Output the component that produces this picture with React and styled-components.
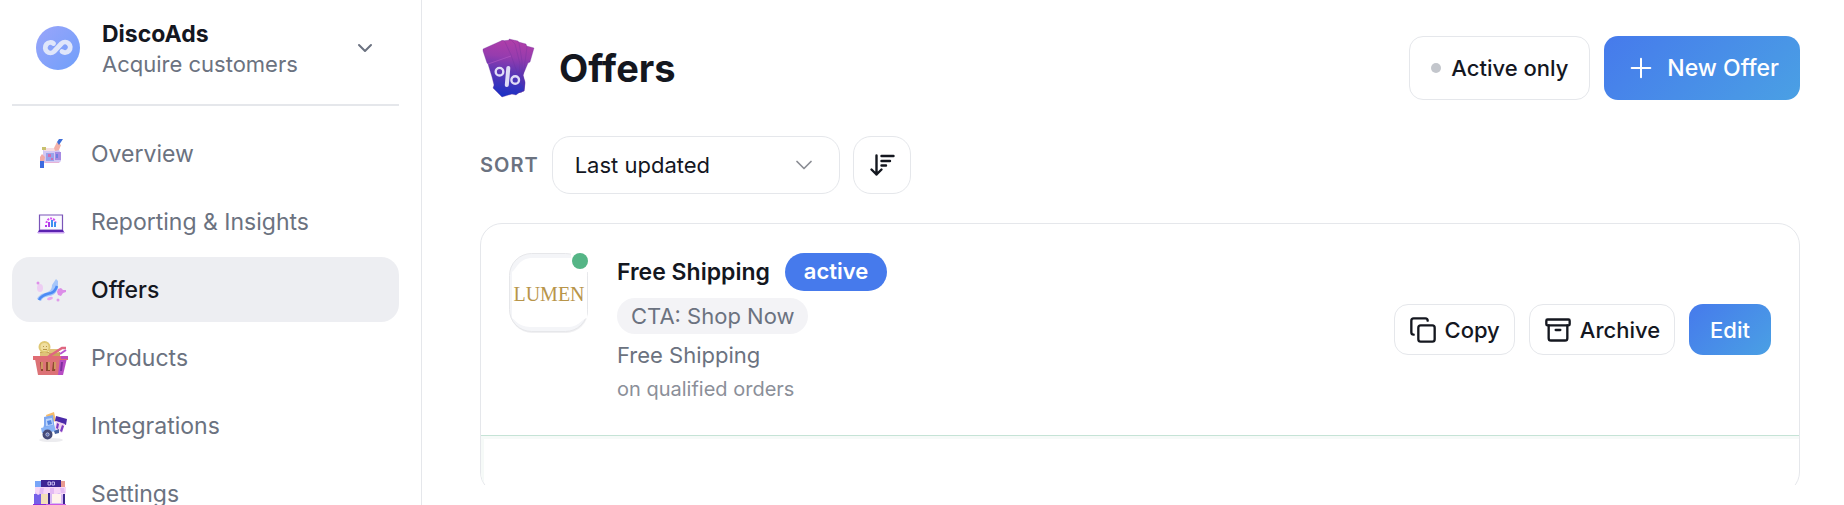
import styled, { createGlobalStyle, css } from "styled-components";
import { Archive, ChevronDown, Copy, Plus } from "lucide-react";

const GlobalStyle = createGlobalStyle`
  * {
    box-sizing: border-box;
    margin: 0;
    padding: 0;
  }

  body {
    background-color: #fff;
    color: #14171f;
    font-family: Inter, "Liberation Sans", sans-serif;
    font-size: 22px;
    overflow: hidden;
  }

  button,
  select {
    font: inherit;
    color: inherit;
  }
`;

const Layout = styled.div`
  display: grid;
  grid-template-columns: 422px 1fr;
  height: 100vh;
`;

const Sidebar = styled.aside`
  border-right: 1px solid #e5e7eb;
  padding: 0 22px 0 12px;
  overflow: hidden;
`;

const AccountButton = styled.button`
  display: flex;
  align-items: center;
  width: 100%;
  height: 106px;
  padding: 0 22px 8px 24px;
  gap: 22px;
  background: none;
  border: none;
  border-bottom: 2px solid #e5e7eb;
  text-align: left;

  & > svg:last-child {
    margin-left: auto;
    color: #6b7280;
  }
`;

const AccountText = styled.span`
  display: flex;
  flex-direction: column;
  padding-top: 2px;
  line-height: 30px;
  color: #6b7280;

  strong {
    font-size: 23px;
    font-weight: 700;
    color: #14171f;
  }
`;

const Nav = styled.nav`
  display: flex;
  flex-direction: column;
  gap: 3px;
  padding-top: 15px;
`;

const NavItem = styled.a`
  display: flex;
  flex-shrink: 0;
  align-items: center;
  gap: 23px;
  height: 65px;
  padding: 0 20px;
  border-radius: 18px;
  color: #6b7280;
  font-size: 23px;
  text-decoration: none;

  ${(props) =>
    props.$active &&
    css`
      background-color: #edeef2;
      color: #14171f;
      font-weight: 500;
    `}
`;

const Main = styled.main`
  display: flex;
  flex-direction: column;
  min-width: 0;
  height: 100vh;
  padding: 36px 44px 20px 58px;
`;

const PageHeader = styled.header`
  display: flex;
  align-items: center;
  justify-content: space-between;
  height: 64px;
`;

const PageTitle = styled.div`
  display: flex;
  align-items: center;
  gap: 23px;

  h1 {
    font-size: 38px;
    font-weight: 700;
    line-height: 48px;
  }
`;

const Actions = styled.div`
  display: flex;
  align-items: center;
  gap: 14px;
`;

const Button = styled.button`
  display: flex;
  align-items: center;
  justify-content: center;
  gap: 8px;
  height: 51px;
  padding: 0 14px;
  border: 1px solid #e5e7eb;
  border-radius: 14px;
  background-color: #fff;
  font-weight: 500;
  white-space: nowrap;

  ${(props) =>
    props.$primary &&
    css`
      border: none;
      padding: 0 21px;
      background: linear-gradient(135deg, #467aec, #4aa0e4);
      color: #fff;
    `}

  ${(props) =>
    props.$large &&
    css`
      gap: 10px;
      height: 64px;
      padding: 0 21px;
      font-size: ${props.$primary ? "23px" : "22px"};
    `}
`;

const MutedDot = styled.span`
  width: 10px;
  height: 10px;
  border-radius: 50%;
  background-color: #c3c6cc;
`;

const SortRow = styled.div`
  display: flex;
  align-items: center;
  gap: 13px;
  margin-top: 36px;
`;

const SortLabel = styled.label`
  color: #6b7280;
  font-size: 20px;
  font-weight: 600;
  letter-spacing: 1px;
`;

const SelectBox = styled.div`
  display: grid;
  align-items: center;
  width: 288px;

  select,
  svg {
    grid-area: 1 / 1;
  }

  select {
    appearance: none;
    width: 100%;
    height: 58px;
    padding: 0 22px;
    border: 1px solid #e5e7eb;
    border-radius: 18px;
    background-color: #fff;
  }

  svg {
    justify-self: end;
    margin-right: 22px;
    color: #8b8d94;
    pointer-events: none;
  }
`;

const SortButton = styled.button`
  display: grid;
  place-items: center;
  width: 58px;
  height: 58px;
  border: 1px solid #e5e7eb;
  border-radius: 18px;
  background-color: #fff;
`;

const ScrollArea = styled.div`
  flex: 1;
  min-height: 0;
  margin-top: 29px;
  overflow: hidden;
`;

const OfferList = styled.ul`
  list-style: none;
  border: 1px solid #e5e7eb;
  border-radius: 22px;
  overflow: hidden;
`;

const OfferRow = styled.li`
  display: flex;
  align-items: center;
  gap: 28px;
  padding: 29px 28px;
`;

const NextRow = styled.li`
  height: 58px;
  border-top: 1px solid #c5e3d6;
  box-shadow: inset 3px 3px #f6faf8;
`;

const OfferInfo = styled.div`
  display: flex;
  flex: 1;
  flex-direction: column;
  align-items: flex-start;
  color: #6b7280;
`;

const OfferName = styled.div`
  display: flex;
  align-items: center;
  gap: 15px;

  h2 {
    color: #14171f;
    font-size: 23px;
    font-weight: 600;
  }
`;

const Badge = styled.span`
  height: ${(props) => (props.$active ? "38px" : "36px")};
  padding: 0 ${(props) => (props.$active ? "19px" : "14px")};
  border-radius: 19px;
  line-height: 36px;
  background-color: #f3f3f6;

  ${(props) =>
    props.$active &&
    css`
      background-color: #467aec;
      color: #fff;
      font-weight: 600;
    `}
`;

const CtaBadge = styled(Badge)`
  margin-top: 7px;
`;

const OfferText = styled.p`
  margin-top: 3px;
  line-height: 36px;
`;

const OfferNote = styled.p`
  color: #8b8f99;
  font-size: 20px;
  line-height: 33px;
`;

const LogoSlot = styled.div`
  align-self: flex-start;
  height: 80px;
`;

function DiscoLogo() {
  return (
    <svg width="44" height="44" viewBox="0 0 44 44" aria-hidden="true">
      <defs>
        <linearGradient id="disco" x1="0" y1="0" x2="1" y2="1">
          <stop offset="0" stopColor="#9aa5fa" />
          <stop offset="1" stopColor="#6f9ffa" />
        </linearGradient>
      </defs>
      <circle cx="22" cy="22" r="22" fill="url(#disco)" />
      <path
        d="M17.500 17.500A5.200 5.200 0 1 0 18 25.500L25.500 17.500A5.200 5.200 0 1 1 26 25.500"
        fill="none"
        stroke="#dfe6fa"
        strokeWidth="4.800"
        strokeLinecap="round"
        strokeLinejoin="round"
      />
    </svg>
  );
}

function OverviewIcon() {
  return (
    <svg width="36" height="36" viewBox="0 0 36 36" aria-hidden="true">
      <path d="M11 14h16l2 3v8l-2 2H11z" fill="#d3c8f3" />
      <path d="M14 17h8v8h-8z" fill="#98a3ea" />
      <path d="M23 16h6v8h-6z" fill="#a78be3" />
      <path d="M12 12h12v3H12z" fill="#f7dde2" />
      <path d="M13 26h14v1H13z" fill="#e7b3d8" />
      <path d="M16 18h3v3h-3zM19 22h2v2h-2z" fill="#cf6fb4" />
      <path d="M24 18h2v4h-2z" fill="#6d7fe0" />
      <path d="M10 11h4v3h-4z" fill="#c8c06e" />
      <path d="M22 12l3-6 4 3-2 5-4 1z" fill="#f3b1a9" />
      <path d="M25 6l2-3h4l-4 6z" fill="#3f6ed8" />
      <path d="M10 18l3 3-1 5H8v-5z" fill="#f2aaa6" />
      <path d="M8 25h4v7H8z" fill="#3d6be0" />
    </svg>
  );
}

function ReportingIcon() {
  return (
    <svg width="36" height="36" viewBox="0 0 36 36" aria-hidden="true">
      <path d="M7.500 11h23v15h-23z" fill="#fbfaff" stroke="#7a55b8" strokeWidth="1.200" />
      <path d="M7 26h24l1 2H6z" fill="#5a22b0" />
      <path d="M5 28h28l-1 1.500H6z" fill="#c9a0f0" />
      <path
        d="M14.500 19a4.500 4.500 0 0 1 9 0"
        fill="none"
        stroke="#d44cf0"
        strokeWidth="2"
        strokeDasharray="2 1"
      />
      <path d="M13 21h2v2h-2zM16 18h2v5h-2z" fill="#b03ce8" />
      <path d="M19 16h2v7h-2zM22 18h2v5h-2z" fill="#3f8ef0" />
    </svg>
  );
}

function OffersIcon() {
  return (
    <svg width="36" height="36" viewBox="0 0 36 36" aria-hidden="true">
      <path
        d="M24 7L20 13C20 18 17 20 13 21C8 22 6 25 5 27L9 29C11 25 13 25 18 24C23 23 26 19 26 14V9z"
        fill="#a5c6fa"
      />
      <path d="M7 28C10 22 15 22 19 21C22 20 24 17 25 14" fill="none" stroke="#4b8bf5" strokeWidth="2.500" />
      <ellipse cx="8" cy="16" rx="3" ry="4" fill="#edcdf3" />
      <circle cx="6" cy="11" r="1.500" fill="#df8fea" />
      <path d="M26 17l3-1 2 2h3v2l-3 1-2 3-3-1-1-3z" fill="#dc8de8" />
      <ellipse cx="18" cy="26.500" rx="3" ry="1.500" transform="rotate(-15 18 26.500)" fill="#e5a8ee" />
      <circle cx="26" cy="28" r="1.500" fill="#e09bea" />
    </svg>
  );
}

function ProductsIcon() {
  return (
    <svg width="36" height="36" viewBox="0 0 36 36" aria-hidden="true">
      <path d="M8 12h20v6H8z" fill="#c9a45a" />
      <path d="M17 9h10v4H17zM8 13h9v4H8z" fill="#dfc27a" />
      <circle cx="12.500" cy="7" r="6" fill="#dfc873" />
      <circle cx="12.500" cy="7" r="4" fill="#f0dfa0" />
      <path d="M11 6h1v1h-1zM14 6h1v1h-1zM11 9h4v1h-4z" fill="#b8964a" />
      <path d="M3 19h31l-4 16H6z" fill="#dc7276" />
      <path d="M28 18h7l-4 17h-5z" fill="#b84cc4" />
      <path d="M1 16h35v4H1z" fill="#e06c74" />
      <path d="M29 16h7v3h-7z" fill="#c04ab8" />
      <path d="M8 22h3v9H9zM14 22h4v9h-4zM21 22h3l-1 9h-3z" fill="#8f4a30" />
      <path d="M9 22h2v7H9zM16 22h2v8h-2zM22 22h2v7h-2z" fill="#cf9860" />
      <path d="M29 22h2l-1 9h-2z" fill="#7f309e" />
      <path d="M16 17L30 8h4" fill="none" stroke="#df6680" strokeWidth="2.500" />
      <path d="M28 14l6-4" stroke="#b852d0" strokeWidth="2" />
    </svg>
  );
}

function IntegrationsIcon() {
  return (
    <svg width="36" height="36" viewBox="0 0 36 36" aria-hidden="true">
      <ellipse cx="19" cy="32" rx="12" ry="2" fill="#ececef" />
      <path d="M14 7l8-3 2 9-8 2z" fill="#f4bb6b" />
      <path d="M24 8l11 3-1 6-11-4z" fill="#4b2aa8" />
      <path d="M24 13l9 3-3 9-7-4z" fill="#f0d3ee" />
      <path d="M25 15l2 1-1 5-2-1zM30 17l2 1-2 6-2-1z" fill="#7b3dc4" />
      <path d="M12 9l9-2 2 16-13 2 2-8z" fill="#7ea8f0" />
      <path d="M14 11l6-1 1 7-7 1z" fill="#bdd5fb" />
      <path d="M15 13l4-1 1 4-4 1z" fill="#5687e0" />
      <path d="M9 20l13-3 2 6-14 2z" fill="#88b3f6" />
      <circle cx="15.500" cy="26.500" r="3.500" fill="#dfe3f2" stroke="#454a78" strokeWidth="3" />
      <circle cx="15.500" cy="26.500" r="1.500" fill="#6978b8" />
      <path d="M22 23l5-2v4l-4 1z" fill="#44609e" />
    </svg>
  );
}

function SettingsIcon() {
  return (
    <svg width="36" height="36" viewBox="0 0 36 36" aria-hidden="true">
      <path d="M3 5h30v27H3z" fill="#d5b8f4" />
      <path d="M3 5h6v6H3z" fill="#78a5f8" />
      <path d="M28 5h5v6h-5z" fill="#e99b91" />
      <path d="M2 18h7v10H2z" fill="#7560e8" />
      <path d="M9 4h20v7H9z" fill="#3c2494" />
      <path d="M16 6h2.500v3H16zM20 6h2.500v3H20z" fill="none" stroke="#c1b6ee" />
      <path d="M3 11h31v6l-3 2-4-2-4 2-5-2-4 2-4-2-4 2-3-3z" fill="#f6d6f7" />
      <path d="M8 12h4l-1 6H7zM18 12h4v6h-4zM28 12h4l1 5h-4z" fill="#e3baf3" />
      <path d="M9 18h7v11H9z" fill="#f3dfb8" />
      <path d="M16 17h2v12h-2zM31 18h2v11h-2z" fill="#3c2890" />
      <path d="M20 18h9v9h-9z" fill="#fff3ec" />
      <path d="M1 28h13v5H1z" fill="#8c2edc" />
      <path d="M14 28h20v5H14z" fill="#cc59e6" />
    </svg>
  );
}

function CouponIcon() {
  return (
    <svg width="56" height="60" viewBox="0 0 56 60" aria-hidden="true">
      <defs>
        <linearGradient id="coupon" gradientUnits="userSpaceOnUse" x1="30" y1="2" x2="24" y2="58">
          <stop offset="0" stopColor="#b03ea8" />
          <stop offset="0.300" stopColor="#963cae" />
          <stop offset="0.550" stopColor="#6237b4" />
          <stop offset="1" stopColor="#1a30c4" />
        </linearGradient>
      </defs>
      <g fill="url(#coupon)" stroke="#6a2f9c" strokeOpacity="0.500" strokeWidth="0.600">
        <path d="M43 7l11 3-4 14-2 1-5 12 2 7-1 9-14-4z" />
        <path d="M35 3l11 3 1 3-2 15-2 14 2 7-1 8-10 2z" />
        <path d="M29 1l9 2 1 2 3 18v16l1 6-1 9-10 2z" />
        <path d="M21 3l10-1 4 4 5 20-1 10 4 9-1 9-12 2z" />
        <path d="M3 11L22 2.500Q24 2 25 4L31 17l1 3 9 25 3 3v5l-4 1-4 3-4-1-10 3-5-5-4-4 1-3-2-8-4-13-1-1L3 13z" />
      </g>
      <path d="M8 26L31 18" stroke="#b45ac6" strokeWidth="0.800" opacity="0.800" />
      <g fill="none" stroke="#dfdcf6">
        <circle cx="19.500" cy="33.700" r="3.800" strokeWidth="2.400" />
        <circle cx="35.200" cy="42" r="3.800" strokeWidth="2.400" />
        <path d="M28.300 30L26.800 47" strokeWidth="4" strokeLinecap="round" />
      </g>
    </svg>
  );
}

function SortIcon() {
  return (
    <svg
      width="26"
      height="26"
      viewBox="0 0 26 26"
      fill="none"
      stroke="currentColor"
      strokeWidth="2.400"
      strokeLinecap="round"
      strokeLinejoin="round"
      aria-hidden="true"
    >
      <path d="M7.500 3.500v19M2.500 17.500l5 5 5-5M12.500 4h12M12.500 9h8.500M12.500 13.500h4.500" />
    </svg>
  );
}

function LumenLogo() {
  return (
    <svg width="80" height="80" viewBox="0 0 80 80" role="img" aria-label="Lumen" overflow="visible">
      <rect x="1" y="2" width="78" height="78" rx="22" fill="#f0f0f2" />
      <rect x="0.500" y="0.500" width="78" height="78" rx="22" fill="#f4f5f8" stroke="#e6e7ea" />
      <path
        d="M3 19C8 16 9 5 24 5H60C70 5 70 16 78 19V65C70 68 70 74 58 74H24C9 74 8 68 3 65z"
        fill="#fff"
      />
      <path d="M62 0V12q0 7 8 7h9V0z" fill="#fff" />
      <circle cx="71" cy="8" r="8" fill="#55b586" />
      <text
        x="40"
        y="48"
        textAnchor="middle"
        fontFamily="'Liberation Serif', serif"
        fontSize="20"
        fill="#b8954a"
      >
        LUMEN
      </text>
    </svg>
  );
}

const NAV_ITEMS = [
  { label: "Overview", icon: OverviewIcon },
  { label: "Reporting & Insights", icon: ReportingIcon },
  { label: "Offers", icon: OffersIcon, active: true },
  { label: "Products", icon: ProductsIcon },
  { label: "Integrations", icon: IntegrationsIcon },
  { label: "Settings", icon: SettingsIcon },
];

function App() {
  return (
    <>
      <GlobalStyle />
      <Layout>
        <Sidebar>
          <AccountButton>
            <DiscoLogo />
            <AccountText>
              <strong>DiscoAds</strong>
              <span>Acquire customers</span>
            </AccountText>
            <ChevronDown size={24} />
          </AccountButton>
          <Nav>
            {NAV_ITEMS.map((item) => (
              <NavItem href="#" key={item.label} $active={item.active}>
                <item.icon />
                <span>{item.label}</span>
              </NavItem>
            ))}
          </Nav>
        </Sidebar>
        <Main>
          <PageHeader>
            <PageTitle>
              <CouponIcon />
              <h1>Offers</h1>
            </PageTitle>
            <Actions>
              <Button $large>
                <MutedDot />
                Active only
              </Button>
              <Button $large $primary>
                <Plus size={32} strokeWidth={1.5} />
                New Offer
              </Button>
            </Actions>
          </PageHeader>
          <SortRow>
            <SortLabel htmlFor="sort">SORT</SortLabel>
            <SelectBox>
              <select id="sort" defaultValue="updated">
                <option value="updated">Last updated</option>
              </select>
              <ChevronDown size={28} strokeWidth={1.5} />
            </SelectBox>
            <SortButton aria-label="Sort direction">
              <SortIcon />
            </SortButton>
          </SortRow>
          <ScrollArea>
            <OfferList>
              <OfferRow>
                <LogoSlot>
                  <LumenLogo />
                </LogoSlot>
                <OfferInfo>
                  <OfferName>
                    <h2>Free Shipping</h2>
                    <Badge $active>active</Badge>
                  </OfferName>
                  <CtaBadge>CTA: Shop Now</CtaBadge>
                  <OfferText>Free Shipping</OfferText>
                  <OfferNote>on qualified orders</OfferNote>
                </OfferInfo>
                <Actions>
                  <Button>
                    <Copy size={28} />
                    Copy
                  </Button>
                  <Button>
                    <Archive size={28} />
                    Archive
                  </Button>
                  <Button $primary>Edit</Button>
                </Actions>
              </OfferRow>
              <NextRow />
            </OfferList>
          </ScrollArea>
        </Main>
      </Layout>
    </>
  );
}

export default App;
